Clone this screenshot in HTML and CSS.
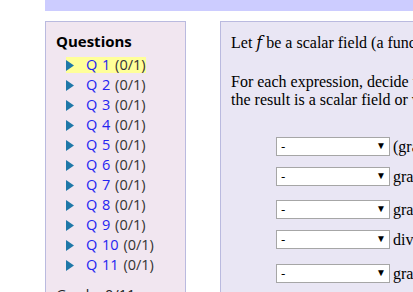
FILE: index.html
```html
<!DOCTYPE html>
<html lang="en">
<head>
    <meta charset="UTF-8">
    <title>Vector Calculus Quiz</title>
    <link rel="stylesheet" href="styles.css">
</head>
<body>
    <div class="topbar"></div>

    <div class="page">
        <div class="sidebar">
            <h3>Questions</h3>
            <ul class="qlist">
                <li><span class="item current"><svg class="arrow" width="8" height="11" viewBox="0 0 8 11"><polygon points="0,0 8,5.5 0,11"/></svg><a href="#">Q 1</a> (0/1)</span></li>
                <li><span class="item"><svg class="arrow" width="8" height="11" viewBox="0 0 8 11"><polygon points="0,0 8,5.5 0,11"/></svg><a href="#">Q 2</a> (0/1)</span></li>
                <li><span class="item"><svg class="arrow" width="8" height="11" viewBox="0 0 8 11"><polygon points="0,0 8,5.5 0,11"/></svg><a href="#">Q 3</a> (0/1)</span></li>
                <li><span class="item"><svg class="arrow" width="8" height="11" viewBox="0 0 8 11"><polygon points="0,0 8,5.5 0,11"/></svg><a href="#">Q 4</a> (0/1)</span></li>
                <li><span class="item"><svg class="arrow" width="8" height="11" viewBox="0 0 8 11"><polygon points="0,0 8,5.5 0,11"/></svg><a href="#">Q 5</a> (0/1)</span></li>
                <li><span class="item"><svg class="arrow" width="8" height="11" viewBox="0 0 8 11"><polygon points="0,0 8,5.5 0,11"/></svg><a href="#">Q 6</a> (0/1)</span></li>
                <li><span class="item"><svg class="arrow" width="8" height="11" viewBox="0 0 8 11"><polygon points="0,0 8,5.5 0,11"/></svg><a href="#">Q 7</a> (0/1)</span></li>
                <li><span class="item"><svg class="arrow" width="8" height="11" viewBox="0 0 8 11"><polygon points="0,0 8,5.5 0,11"/></svg><a href="#">Q 8</a> (0/1)</span></li>
                <li><span class="item"><svg class="arrow" width="8" height="11" viewBox="0 0 8 11"><polygon points="0,0 8,5.5 0,11"/></svg><a href="#">Q 9</a> (0/1)</span></li>
                <li><span class="item"><svg class="arrow" width="8" height="11" viewBox="0 0 8 11"><polygon points="0,0 8,5.5 0,11"/></svg><a href="#">Q 10</a> (0/1)</span></li>
                <li><span class="item"><svg class="arrow" width="8" height="11" viewBox="0 0 8 11"><polygon points="0,0 8,5.5 0,11"/></svg><a href="#">Q 11</a> (0/1)</span></li>
            </ul>
            <p class="grade">Grade: 0/11</p>
        </div>

        <div class="main">
            <p>Let <i class="math">f</i> be a scalar field (a function from R<sup>3</sup> to R) and <b>F</b> a vector field.</p>
            <p>For each expression, decide whether it is meaningful and, if so, whether<br>
            the result is a scalar field or vector field.</p>

            <div class="answers">
                <div class="row">
                    <span class="pick"><select><option>-</option><option>scalar field</option><option>vector field</option><option>meaningless</option></select><span class="caret">&#9660;</span></span>
                    <span class="expr">(grad <i>f</i>) &times; <b>F</b></span>
                </div>
                <div class="row tall">
                    <span class="pick"><select><option>-</option><option>scalar field</option><option>vector field</option><option>meaningless</option></select><span class="caret">&#9660;</span></span>
                    <span class="expr">grad(div <b>F</b>)</span>
                </div>
                <div class="row">
                    <span class="pick"><select><option>-</option><option>scalar field</option><option>vector field</option><option>meaningless</option></select><span class="caret">&#9660;</span></span>
                    <span class="expr">grad(grad <i>f</i>)</span>
                </div>
                <div class="row taller">
                    <span class="pick"><select><option>-</option><option>scalar field</option><option>vector field</option><option>meaningless</option></select><span class="caret">&#9660;</span></span>
                    <span class="expr">div(curl <b>F</b>)</span>
                </div>
                <div class="row">
                    <span class="pick"><select><option>-</option><option>scalar field</option><option>vector field</option><option>meaningless</option></select><span class="caret">&#9660;</span></span>
                    <span class="expr">grad <i>f</i> &middot; <b>F</b></span>
                </div>
            </div>
        </div>
    </div>
</body>
</html>
```

FILE: styles.css
```css
html, body {
    overflow: hidden;
}
body {
    margin: 0;
    font-family: "Liberation Serif", serif;
    font-size: 16px;
    color: #000;
    background: #fff;
}
.topbar {
    margin-left: 45px;
    height: 11px;
    width: 900px;
    background: #ccccff;
}
.page {
    display: flex;
    align-items: flex-start;
    gap: 34px;
    margin-top: 10px;
    padding-left: 45px;
}
.sidebar {
    flex: none;
    width: 129px;
    height: 300px;
    padding: 10px 0 0 10px;
    background: #f1e6f0;
    border: 1px solid #babadf;
    font-family: "Open Sans", sans-serif;
    font-size: 14.5px;
}
.sidebar h3 {
    margin: 0 0 5px;
    font-size: 15px;
    line-height: 18px;
}
.qlist {
    list-style: none;
    margin: 0;
    padding: 0 0 0 10px;
}
.qlist li {
    height: 20px;
}
.item {
    display: inline-block;
    line-height: 16px;
    word-spacing: 1px;
    color: #333;
}
.item.current {
    background: #ffff99;
}
.arrow {
    fill: #1f78a8;
    margin-right: 12px;
    vertical-align: -1px;
}
.item a {
    color: #2424f0;
    text-decoration: none;
}
.grade {
    margin: 11px 0 0;
    line-height: 18px;
    color: #222;
}
.main {
    flex: none;
    width: 560px;
    height: 300px;
    padding: 12px 10px 0 10px;
    background: #e9e6f4;
    border: 1px solid #babadf;
}
.main p {
    margin: 0 0 19px;
    line-height: 18px;
}
.main p:first-child {
    margin-bottom: 21px;
}
.main sup {
    line-height: 0;
}
.math {
    font-family: "DejaVu Serif", serif;
}
.answers {
    padding: 9px 0 0 45px;
}
.row {
    display: flex;
    align-items: flex-start;
    gap: 3px;
    height: 30px;
}
.row.tall {
    height: 33px;
}
.row.taller {
    height: 34px;
}
.expr {
    line-height: 19px;
}
.pick {
    position: relative;
    display: inline-block;
}
.pick select {
    appearance: none;
    display: block;
    width: 114px;
    height: 19px;
    margin: 0;
    padding: 0 0 0 4px;
    background: #fff;
    border: 1px solid #a6a6a6;
    border-radius: 0;
    font-family: "DejaVu Sans", sans-serif;
    font-size: 12px;
    color: #000;
}
.caret {
    position: absolute;
    right: 4px;
    top: 4px;
    font-size: 10px;
    line-height: 10px;
    pointer-events: none;
}
```
